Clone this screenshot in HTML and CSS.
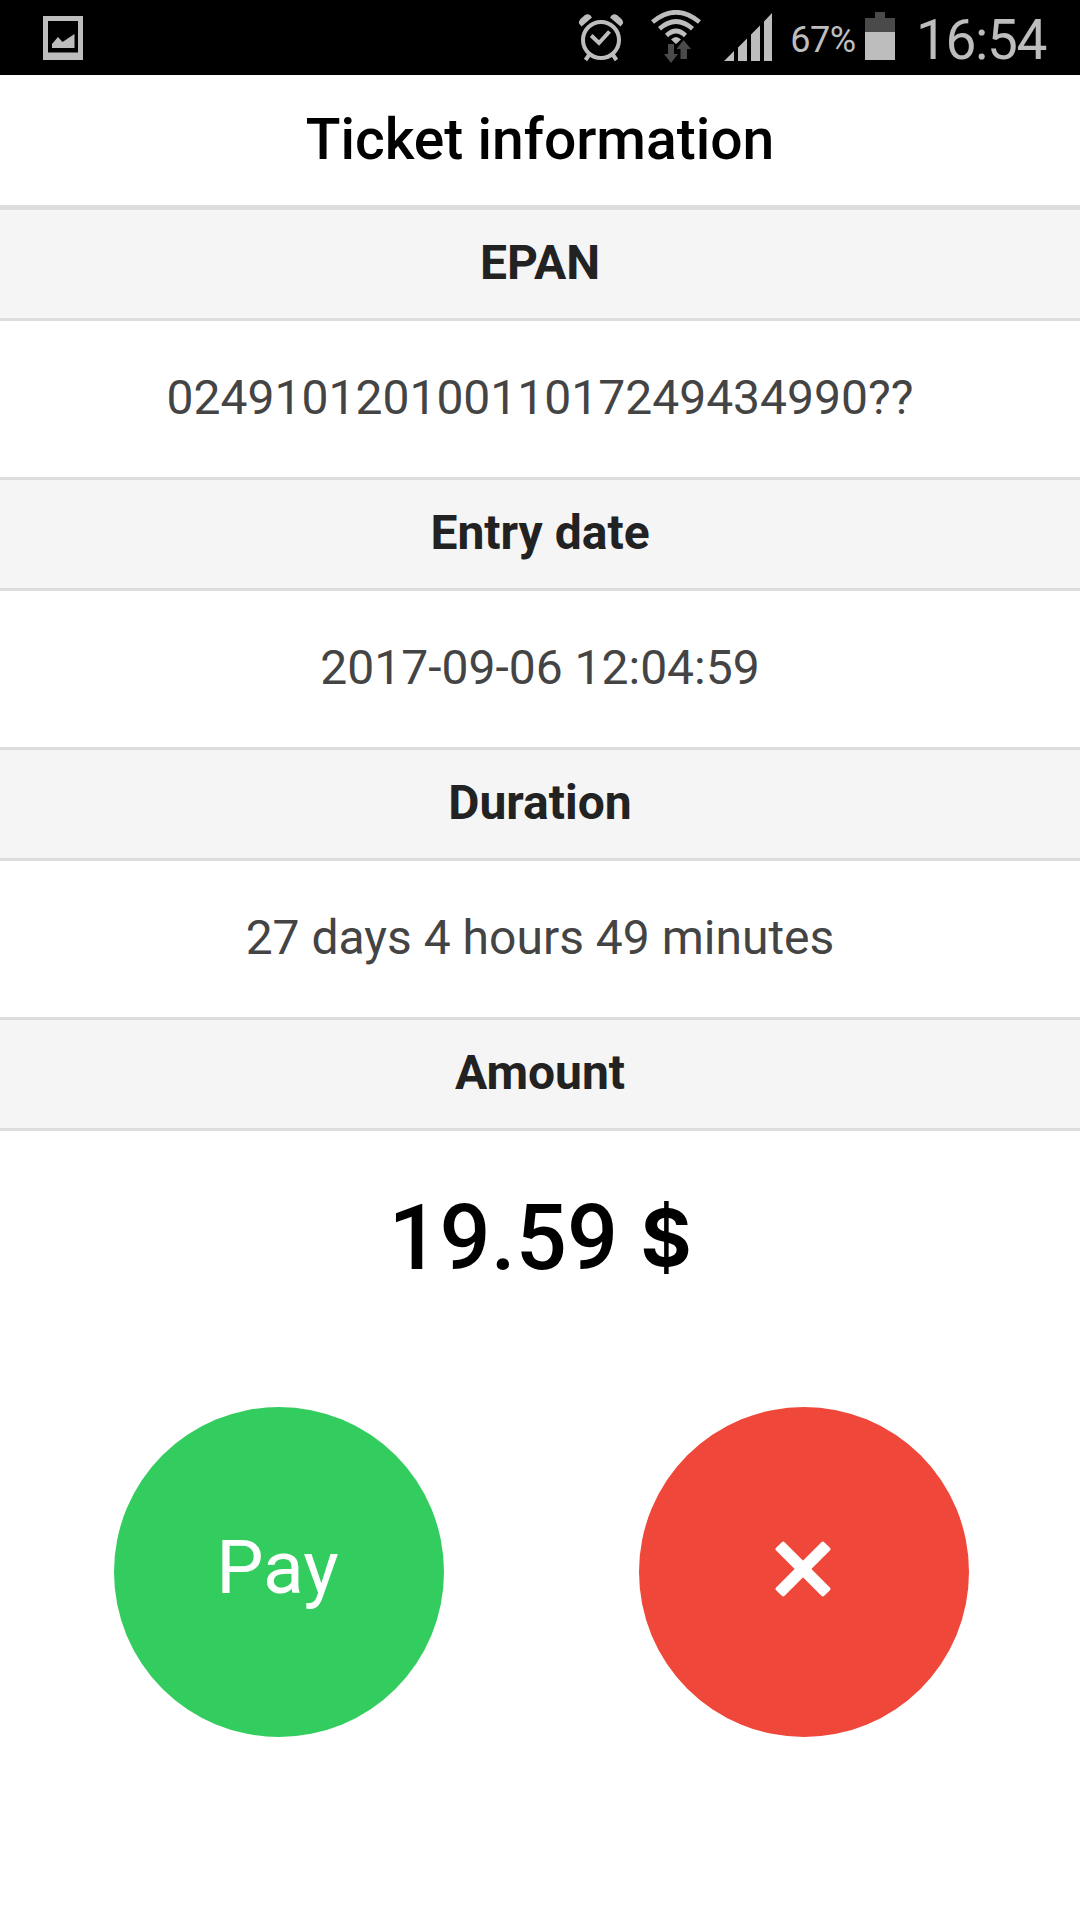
FILE: index.html
```html
<!DOCTYPE html>
<html lang="en">
<head>
<meta charset="UTF-8">
<meta name="viewport" content="width=device-width, initial-scale=1.0">
<title>Ticket information</title>
<link rel="stylesheet" href="styles.css">
</head>
<body>

<div class="status-bar">
  <svg class="icon-picture" width="40" height="44" viewBox="0 0 40 44">
    <path fill="#bdbdbd" fill-rule="evenodd" d="M0 0h40v44H0z M5 5v31.500h30V5z"/>
    <path fill="#bdbdbd" d="M9 32v-4l6-7 4.500 5L31.500 18v14z"/>
  </svg>

  <svg class="icon-alarm" width="46" height="48" viewBox="0 0 46 48" fill="none" stroke="#bdbdbd">
    <circle cx="23" cy="26" r="18" stroke-width="4"/>
    <path stroke-width="4" d="M13.200 21.500l7.800 7.500 10.500-11.500"/>
    <path stroke-width="4" d="M11 41l-3.500 5M35 41l3.500 5"/>
    <path fill="#bdbdbd" stroke="none" d="M3.500 12.500L1 9.500Q.5 7 2.500 5L7 1Q9.500-.5 12 1l2 2.500z M42.500 12.500L45 9.500Q45.500 7 43.500 5L39 1Q36.500-.5 34 1l-2 2.500z"/>
  </svg>

  <svg class="icon-wifi" width="50" height="54" viewBox="0 0 50 54">
    <g fill="none" stroke="#bdbdbd" stroke-width="4.600">
      <path d="M1.500 12Q25-7.500 48.500 12"/>
      <path d="M8.500 18.700Q25 4.300 41.500 18.700"/>
      <path d="M15.500 25.500Q25 16.500 34.500 25.500"/>
    </g>
    <path fill="#bdbdbd" d="M20 29.500q5-5 10 0l-5 4.500z"/>
    <path fill="#4a4a4a" d="M17 34h6v10h4l-7 9-7-9h4z M29.500 49V39h-4l7-9 7.500 9h-4v10z"/>
  </svg>

  <svg class="icon-signal" width="48" height="48" viewBox="0 0 48 48" fill="#bdbdbd">
    <path d="M0 48l10-10v10z M14 48V34.500l9-9V48z M27 48V21.500l9-9V48z M40 48V8.500L48 0v48z"/>
  </svg>

  <span class="battery-text">67%</span>

  <svg class="icon-battery" width="30" height="48" viewBox="0 0 30 48">
    <path fill="#4a4a4a" d="M10 0h10v6h10v14H0V6h10z"/>
    <path fill="#bdbdbd" d="M0 20h30v28H0z"/>
  </svg>

  <span class="clock">16:54</span>
</div>

<h1 class="title">Ticket information</h1>

<div class="ticket">
  <h2 class="label">EPAN</h2>
  <p class="value">02491012010011017249434990??</p>

  <h2 class="label">Entry date</h2>
  <p class="value">2017-09-06 12:04:59</p>

  <h2 class="label">Duration</h2>
  <p class="value">27 days 4 hours 49 minutes</p>

  <h2 class="label">Amount</h2>
  <p class="amount">19.59 <span class="currency">$</span></p>
</div>

<div class="buttons">
  <button type="button" class="button pay">Pay</button>
  <button type="button" class="button cancel" aria-label="Cancel">
    <svg width="56" height="56" viewBox="0 0 56 56" fill="#fff">
      <rect x="-6" y="22" width="68" height="12" rx="2" transform="rotate(45 28 28)"/>
      <rect x="-6" y="22" width="68" height="12" rx="2" transform="rotate(-45 28 28)"/>
    </svg>
  </button>
</div>

</body>
</html>
```
FILE: styles.css
```css
* {
  box-sizing: border-box;
}
body {
  font-family: Roboto, sans-serif;
  text-align: center;
  color: #000;
  background-color: #fff;
  min-height: 100vh;
  margin: 0;
}
.status-bar {
  display: flex;
  align-items: flex-start;
  height: 75px;
  padding-left: 43px;
  background-color: #000;
  color: #bdbdbd;
  white-space: nowrap;
}
.icon-picture {
  margin-top: 16px;
}
.icon-alarm {
  margin-top: 14px;
  margin-left: 495px;
}
.icon-wifi {
  margin-top: 10px;
  margin-left: 27px;
}
.icon-signal {
  margin-top: 13px;
  margin-left: 23px;
}
.battery-text {
  width: 66px;
  margin-top: 19px;
  margin-left: 18px;
  font-size: 36px;
  line-height: 42px;
  letter-spacing: -0.4px;
}
.icon-battery {
  margin-top: 12px;
  margin-left: 9px;
}
.clock {
  margin-top: 8px;
  margin-left: 21px;
  font-size: 55px;
  line-height: 64px;
  letter-spacing: -1.4px;
}
.title {
  height: 135px;
  margin: 0;
  border-bottom: 5px solid #ddd;
  font-size: 57px;
  font-weight: 500;
  line-height: 129px;
}
.label {
  height: 114px;
  margin: 0;
  border-top: 3px solid #ddd;
  border-bottom: 3px solid #ddd;
  background-color: #f5f5f5;
  color: #222;
  font-size: 48px;
  font-weight: bold;
  line-height: 105px;
}
.label:first-child {
  height: 111px;
  border-top: none;
}
.value {
  height: 156px;
  margin: 0;
  color: #444;
  font-size: 48px;
  line-height: 153px;
}
.amount {
  height: 276px;
  margin: 0;
  font-size: 90px;
  font-weight: 500;
  line-height: 215px;
}
.currency {
  font-family: Inter, sans-serif;
  font-size: 78px;
  font-weight: 700;
  line-height: 1;
  vertical-align: 3px;
}
.buttons {
  display: flex;
  gap: 195px;
  padding-left: 114px;
}
.button {
  display: flex;
  justify-content: center;
  align-items: center;
  width: 330px;
  height: 330px;
  padding: 0 3px 10px 0;
  border: none;
  border-radius: 50%;
  color: #fff;
  font-family: inherit;
  font-size: 75px;
}
.pay {
  background-color: #33cd5f;
}
.cancel {
  padding-bottom: 6px;
  background-color: #ef473a;
}
```
